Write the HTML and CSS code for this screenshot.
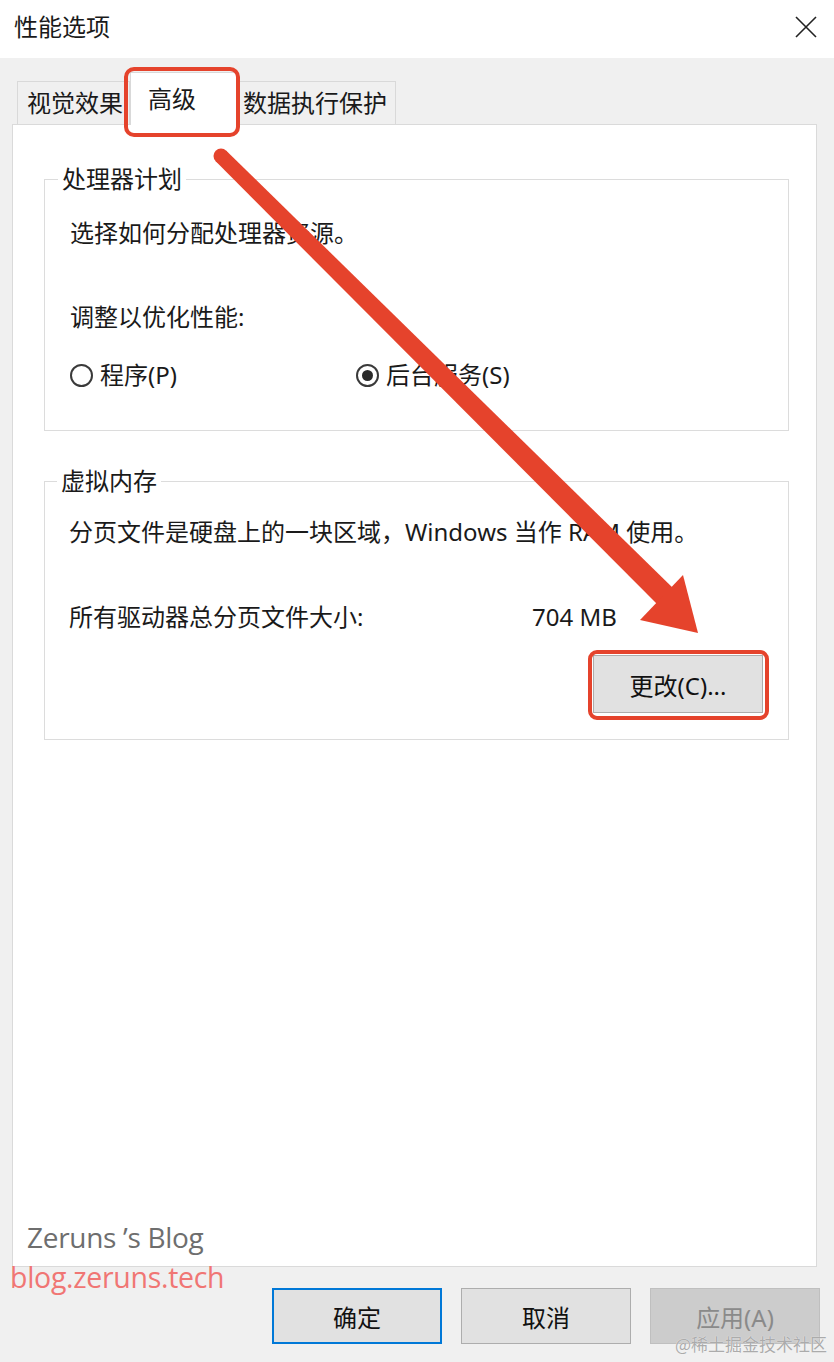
FILE: index.html
```html
<!DOCTYPE html>
<html>

<head>
    <title>性能选项</title>
    <link rel="stylesheet" href="styles.css">
</head>

<body>
    <div class="window">
        <header class="titlebar">
            <span class="title">性能选项</span>
            <svg class="close" width="22" height="22" viewBox="0 0 22 22">
                <path d="M1 1 L21 21 M21 1 L1 21" stroke="#222" stroke-width="1.6" fill="none" />
            </svg>
        </header>

        <main class="client">
            <div class="tabs">
                <div class="tab first">视觉效果</div>
                <div class="tab active marked">高级</div>
                <div class="tab last">数据执行保护</div>
            </div>

            <section class="tab-panel">
                <fieldset class="group cpu">
                    <legend>处理器计划</legend>
                    <p class="lead">选择如何分配处理器资源。</p>
                    <p class="hint">调整以优化性能:</p>
                    <div class="radios">
                        <label class="radio"><span class="circle"></span>程序(P)</label>
                        <label class="radio checked"><span class="circle"></span>后台服务(S)</label>
                    </div>
                </fieldset>

                <fieldset class="group vm">
                    <legend>虚拟内存</legend>
                    <p class="lead">分页文件是硬盘上的一块区域，Windows 当作 RAM 使用。</p>
                    <div class="size-row">
                        <span>所有驱动器总分页文件大小:</span>
                        <span>704 MB</span>
                    </div>
                    <div class="change-row">
                        <button class="btn change marked">更改(C)...</button>
                    </div>
                </fieldset>
            </section>

            <footer class="dialog-buttons">
                <button class="btn default">确定</button>
                <button class="btn">取消</button>
                <button class="btn" disabled>应用(A)</button>
            </footer>
        </main>

        <!-- annotation arrow drawn over the dialog -->
        <svg class="arrow" width="834" height="1362" viewBox="0 0 834 1362">
            <circle cx="221" cy="156" r="7.5" fill="#e5432c" />
            <polygon points="226.3,150.7 675,590 659,606 215.7,161.3" fill="#e5432c" />
            <polygon points="640,620 683,575 698,633" fill="#e5432c" />
        </svg>

        <div class="wm-blog">Zeruns ’s Blog</div>
        <div class="wm-url">blog.zeruns.tech</div>
        <div class="wm-juejin">@稀土掘金技术社区</div>
    </div>
</body>

</html>
```

FILE: styles.css
```css
body {
    margin: 0;
    font-family: "Noto Sans", "Noto Sans CJK SC", sans-serif;
    font-size: 24px;
    color: #1a1a1a;
}

.window {
    position: relative;
    width: 834px;
    height: 1362px;
    display: flex;
    flex-direction: column;
    overflow: hidden;
}

.titlebar {
    height: 58px;
    flex: none;
    display: flex;
    align-items: center;
    justify-content: space-between;
    padding: 0 17px 4px 14px;
    box-sizing: border-box;
    background-color: #fff;
}

.title {
    line-height: 30px;
}

.client {
    flex: 1;
    display: flex;
    flex-direction: column;
    padding: 14px 17px 0 12px;
    background-color: #f0f0f0;
}

/* tabs */

.tabs {
    display: flex;
    align-items: flex-end;
    margin-left: 5px;
}

.tab {
    height: 43px;
    line-height: 41px;
    padding: 0 6px 0 9px;
    border: 1px solid #d9d9d9;
    border-bottom: none;
    box-sizing: border-box;
    background-color: #f0f0f0;
    white-space: nowrap;
}

.tab.last {
    padding-left: 5px;
    padding-right: 8px;
}

.tab.active {
    position: relative;
    z-index: 1;
    height: 53px;
    margin-bottom: -1px;
    line-height: 30px;
    padding: 11px 40px 0 17px;
    background-color: #fff;
}

.marked::after {
    content: "";
    position: absolute;
    border: 4px solid #e5432c;
    border-radius: 10px;
    pointer-events: none;
}

.tab.marked::after {
    top: -6px;
    left: -7px;
    right: -4px;
    bottom: -12px;
}

.tab-panel {
    flex: 1;
    padding: 0 27px 0 31px;
    border: 1px solid #dadada;
    background-color: #fff;
}

/* group boxes */

.group {
    margin: 0;
    padding: 0 25px 0 25px;
    border: 1px solid #dcdcdc;
}

.group legend {
    margin-left: -12px;
    padding: 0 4px;
    line-height: 30px;
}

.group p {
    margin: 0;
    line-height: 30px;
}

.cpu {
    margin-top: 39px;
    padding-bottom: 40px;
}

.cpu .lead {
    margin-top: 24px;
}

.cpu .hint {
    margin-top: 54px;
}

.radios {
    display: grid;
    grid-template-columns: 286px auto;
    margin-top: 28px;
    line-height: 30px;
}

.radio {
    display: flex;
    align-items: center;
    gap: 7px;
}

.circle {
    width: 19px;
    height: 19px;
    border: 2px solid #3a3a3a;
    border-radius: 50%;
    display: flex;
    align-items: center;
    justify-content: center;
}

.radio.checked .circle::before {
    content: "";
    width: 11px;
    height: 11px;
    border-radius: 50%;
    background-color: #2a2a2a;
}

.vm {
    margin-top: 35px;
    padding-left: 24px;
    padding-bottom: 26px;
}

.vm .lead {
    margin-top: 21px;
    white-space: nowrap;
}

.size-row {
    display: grid;
    grid-template-columns: 463px auto;
    margin-top: 55px;
    line-height: 30px;
}

.change-row {
    display: flex;
    justify-content: flex-end;
    margin-top: 23px;
}

/* buttons */

.btn {
    position: relative;
    width: 170px;
    height: 56px;
    padding: 0;
    border: 1px solid #adadad;
    background-color: #e1e1e1;
    font-family: inherit;
    font-size: 24px;
    color: #111;
}

.btn.change {
    height: 58px;
}

.btn.change.marked::after {
    top: -6px;
    left: -6px;
    right: -7px;
    bottom: -8px;
    border-radius: 9px;
}

.btn.default {
    border: 2px solid #0078d7;
}

.btn:disabled {
    background-color: #cccccc;
    border-color: #bfbfbf;
    color: #8a8a8a;
}

.dialog-buttons {
    display: flex;
    justify-content: flex-end;
    gap: 19px;
    padding: 21px 0 18px 0;
    margin-right: -3px;
}

/* overlays: arrow and watermarks */

.arrow {
    position: absolute;
    top: 0;
    left: 0;
    pointer-events: none;
}

.wm-blog {
    position: absolute;
    left: 27px;
    top: 1218px;
    font-family: "Open Sans", sans-serif;
    font-size: 28px;
    letter-spacing: -0.3px;
    color: #6e6e6e;
}

.wm-url {
    position: absolute;
    left: 10px;
    top: 1258px;
    font-family: "Open Sans", sans-serif;
    font-size: 28.5px;
    letter-spacing: -0.3px;
    color: #f07674;
}

.wm-juejin {
    position: absolute;
    right: 7px;
    top: 1333px;
    font-family: "Noto Sans CJK SC", sans-serif;
    font-size: 17px;
    line-height: 22px;
    color: #ababab;
    text-shadow: 0 0 1px #fff;
}
```
